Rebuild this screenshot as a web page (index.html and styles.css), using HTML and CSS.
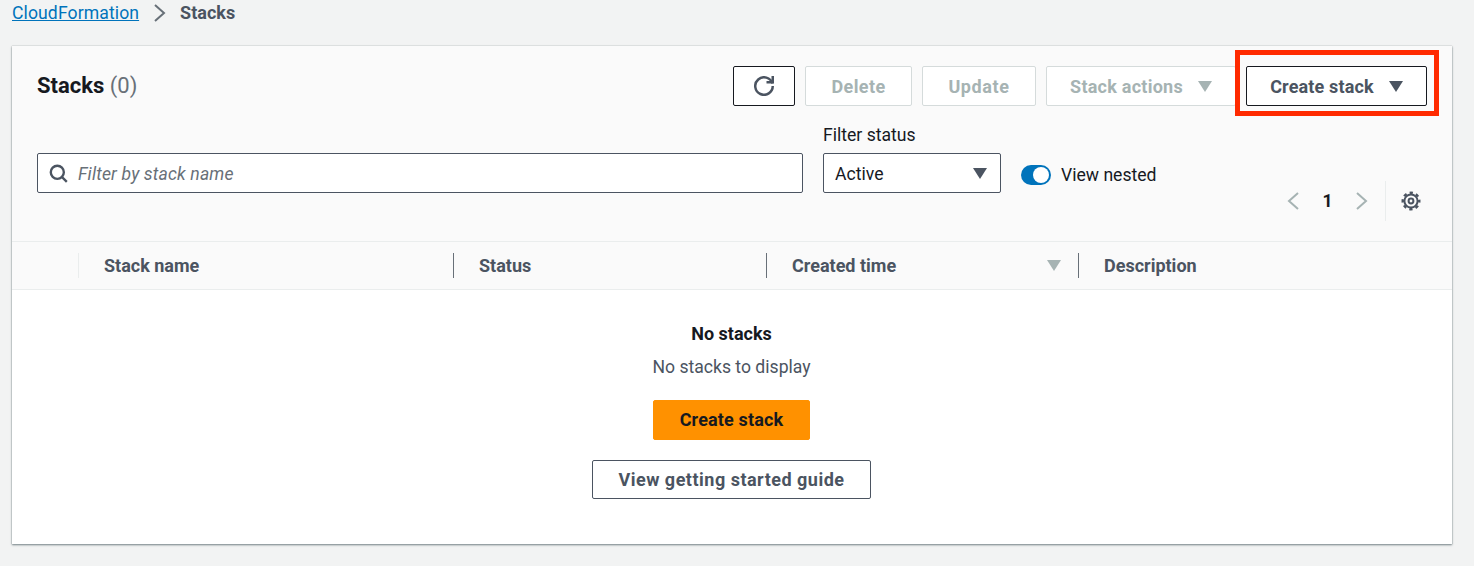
FILE: index.html
```html
<!DOCTYPE html>
<html lang="en">
<head>
    <meta charset="UTF-8">
    <meta name="viewport" content="width=device-width, initial-scale=1.0">
    <title>Stacks</title>
    <link rel="stylesheet" href="styles.css">
</head>
<body>
    <nav class="breadcrumbs">
        <a href="#">CloudFormation</a>
        <svg class="crumb-sep" viewBox="0 0 16 24"><path d="M3 4l9 8-9 8"/></svg>
        <span class="crumb-current">Stacks</span>
    </nav>

    <div class="card">
        <div class="card-header">
            <div class="title-row">
                <h1>Stacks <span class="count">(0)</span></h1>
                <div class="actions">
                    <button class="btn btn-icon" type="button">
                        <svg class="icon" viewBox="0 0 16 16"><path d="M10 5h5V0"/><path d="M15 8a7 7 0 1 1-.3-2"/></svg>
                    </button>
                    <button class="btn btn-delete" type="button" disabled>Delete</button>
                    <button class="btn btn-update" type="button" disabled>Update</button>
                    <button class="btn btn-stack-actions" type="button" disabled>Stack actions <i class="caret"></i></button>
                    <button class="btn btn-create-menu" type="button">Create stack <i class="caret"></i></button>
                </div>
            </div>
            <div class="filter-row">
                <div class="search">
                    <svg class="search-icon" viewBox="0 0 16 16"><circle cx="7" cy="7" r="5.5"/><path d="M11 11l4 4"/></svg>
                    <span class="search-text">Filter by stack name</span>
                </div>
                <div class="status-filter">
                    <label>Filter status</label>
                    <div class="select"><span class="select-value">Active</span> <i class="caret"></i></div>
                </div>
                <div class="nested">
                    <span class="toggle"></span>
                    <span>View nested</span>
                </div>
                <div class="pager">
                    <svg class="pager-arrow" viewBox="0 0 16 24"><path d="M13 4L4 12l9 8"/></svg>
                    <span class="page-num">1</span>
                    <svg class="pager-arrow" viewBox="0 0 16 24"><path d="M3 4l9 8-9 8"/></svg>
                    <span class="pager-sep"></span>
                    <svg class="gear" viewBox="0 0 20 20">
                        <circle class="gear-ring" cx="10" cy="10" r="6.6"/>
                        <circle class="gear-teeth" cx="10" cy="10" r="8.3"/>
                        <circle class="gear-hole" cx="10" cy="10" r="2.4"/>
                    </svg>
                </div>
            </div>
        </div>

        <table class="stacks">
            <colgroup>
                <col class="col-select">
                <col class="col-name">
                <col class="col-status">
                <col class="col-created">
                <col>
            </colgroup>
            <thead>
                <tr>
                    <th></th>
                    <th><div class="th-inner th-first">Stack name</div></th>
                    <th><div class="th-inner">Status</div></th>
                    <th><div class="th-inner">Created time <i class="caret caret-sort"></i></div></th>
                    <th><div class="th-inner">Description</div></th>
                </tr>
            </thead>
            <tbody>
                <tr>
                    <td colspan="5" class="empty">
                        <div class="empty-title">No stacks</div>
                        <div class="empty-text">No stacks to display</div>
                        <button class="btn btn-primary" type="button">Create stack</button>
                        <button class="btn btn-guide" type="button">View getting started guide</button>
                    </td>
                </tr>
            </tbody>
        </table>
    </div>

    <div class="highlight"></div>
</body>
</html>
```

FILE: styles.css
```css
/* Custom styles */
* {
    box-sizing: border-box;
}
body {
    margin: 0;
    height: 566px;
    overflow: hidden;
    background-color: #f2f3f3;
    font-family: Roboto, sans-serif;
    font-size: 17.6px;
    color: #16191f;
}
.breadcrumbs {
    display: flex;
    align-items: center;
    height: 26px;
    padding-left: 12px;
}
.breadcrumbs a {
    color: #0073bb;
    letter-spacing: 0.1px;
}
.crumb-sep {
    width: 16px;
    height: 24px;
    margin: 0 12px 0 13px;
    fill: none;
    stroke: #687078;
    stroke-width: 2;
}
.crumb-current {
    color: #4b5461;
    font-size: 18px;
    font-weight: 700;
    margin-bottom: 1px;
}
.card {
    margin: 20px 22px 0 12px;
    height: 498px;
    background-color: #fff;
    box-shadow: 0 1px 2px rgba(0, 28, 36, 0.5), 0 0 1px rgba(0, 28, 36, 0.3);
}
.card-header {
    height: 196px;
    padding: 20px 25px 0;
    background-color: #fafafa;
    border-bottom: 1px solid #eaeded;
}
.title-row {
    display: flex;
    justify-content: space-between;
    align-items: center;
    height: 40px;
}
h1 {
    margin: 0 0 2px;
    font-size: 22px;
    font-weight: 700;
}
.count {
    font-weight: 400;
    color: #687078;
}
.actions {
    display: flex;
    gap: 10px;
}
.btn {
    display: flex;
    align-items: center;
    justify-content: center;
    height: 40px;
    padding: 0;
    background-color: #fff;
    border: 1px solid #4b5461;
    border-radius: 2px;
    font-family: inherit;
    font-size: 18px;
    font-weight: 700;
    letter-spacing: 0.15px;
    color: #4b5461;
    cursor: pointer;
}
.btn:disabled {
    border-color: #d5dbdb;
    color: #a6b3b3;
}
.btn:disabled .caret {
    border-top-color: #a6b3b3;
}
.btn-icon {
    width: 62px;
    border-color: #16191f;
}
.btn-delete {
    width: 107px;
    letter-spacing: 0.4px;
}
.btn-update {
    width: 114px;
    letter-spacing: 0.6px;
}
.btn-stack-actions {
    width: 190px;
    letter-spacing: 0.25px;
}
.btn-create-menu {
    width: 181px;
    border-color: #16191f;
}
.icon {
    width: 20px;
    height: 20px;
    fill: none;
    stroke: #4b5461;
    stroke-width: 2;
}
.caret {
    display: inline-block;
    width: 0;
    height: 0;
    margin-left: 15px;
    border-left: 7px solid transparent;
    border-right: 7px solid transparent;
    border-top: 11px solid #4b5461;
}
.filter-row {
    display: flex;
    align-items: flex-start;
    height: 96px;
    margin-top: 19px;
}
.search {
    display: flex;
    align-items: center;
    gap: 10px;
    width: 766px;
    height: 40px;
    margin-top: 28px;
    padding-left: 11px;
    background-color: #fff;
    border: 1px solid #4b5461;
    border-radius: 2px;
    color: #687078;
}
.search-text {
    padding-top: 2px;
    font-style: italic;
    letter-spacing: 0.15px;
}
.search-icon {
    width: 19px;
    height: 19px;
    fill: none;
    stroke: #4b5461;
    stroke-width: 2;
}
.status-filter {
    margin-left: 20px;
    width: 178px;
}
.status-filter label {
    display: block;
    height: 28px;
    line-height: 20px;
}
.select {
    display: flex;
    align-items: center;
    justify-content: space-between;
    height: 40px;
    padding: 0 13px 0 11px;
    background-color: #fff;
    border: 1px solid #4b5461;
    border-radius: 2px;
}
.select-value {
    padding-top: 2px;
}
.nested {
    display: flex;
    align-items: center;
    gap: 10px;
    height: 44px;
    margin: 28px 0 0 20px;
}
.toggle {
    position: relative;
    width: 30px;
    height: 20px;
    border-radius: 10px;
    background-color: #0073bb;
}
.toggle::after {
    content: "";
    position: absolute;
    top: 2px;
    right: 2px;
    width: 16px;
    height: 16px;
    border-radius: 50%;
    background-color: #fff;
}
.pager {
    display: flex;
    align-items: center;
    align-self: flex-end;
    height: 40px;
    margin-left: auto;
}
.pager-arrow {
    width: 16px;
    height: 24px;
    fill: none;
    stroke: #a6b3b3;
    stroke-width: 2;
}
.page-num {
    width: 53px;
    text-align: center;
    font-weight: 700;
}
.pager-sep {
    width: 1px;
    height: 40px;
    margin: 0 15px;
    background-color: #eaeded;
}
.gear {
    width: 20px;
    height: 20px;
    margin-right: 6px;
    fill: none;
    stroke: #4b5461;
}
.gear-ring {
    stroke-width: 2;
}
.gear-teeth {
    stroke-width: 2.4;
    stroke-dasharray: 3.3 3.22;
    stroke-dashoffset: 1.65;
}
.gear-hole {
    stroke-width: 2;
}
.stacks {
    width: 100%;
    border-collapse: collapse;
    table-layout: fixed;
}
.col-select {
    width: 66px;
}
.col-name {
    width: 375px;
}
.col-status {
    width: 313px;
}
.col-created {
    width: 312px;
}
.stacks th {
    height: 47px;
    padding: 0;
    background-color: #fafafa;
    border-bottom: 1px solid #eaeded;
    font-size: 18px;
    font-weight: 700;
    text-align: left;
    color: #4b5461;
}
.th-inner {
    display: flex;
    align-items: center;
    justify-content: space-between;
    height: 25px;
    padding: 0 17px 0 25px;
    border-left: 1px solid #687078;
}
.th-first {
    border-left-color: #eaeded;
}
.caret-sort {
    border-top-color: #a6b3b3;
}
.empty {
    padding: 0 1px 0 0;
    text-align: center;
}
.empty .btn {
    margin: 0 auto;
}
.empty-title {
    margin-top: 32px;
    line-height: 24px;
    font-size: 18px;
    font-weight: 700;
}
.empty-text {
    margin-top: 9px;
    line-height: 24px;
    color: #4b5461;
}
.btn-primary {
    width: 157px;
    margin-top: 21px !important;
    background-color: #ff9100;
    border-color: #ff9100;
    color: #16191f;
}
.btn-guide {
    width: 279px;
    height: 39px;
    margin-top: 20px !important;
    letter-spacing: 0.5px;
}
.highlight {
    position: absolute;
    left: 1235px;
    top: 50px;
    width: 204px;
    height: 66px;
    border: 5px solid #ff2a00;
}
```
